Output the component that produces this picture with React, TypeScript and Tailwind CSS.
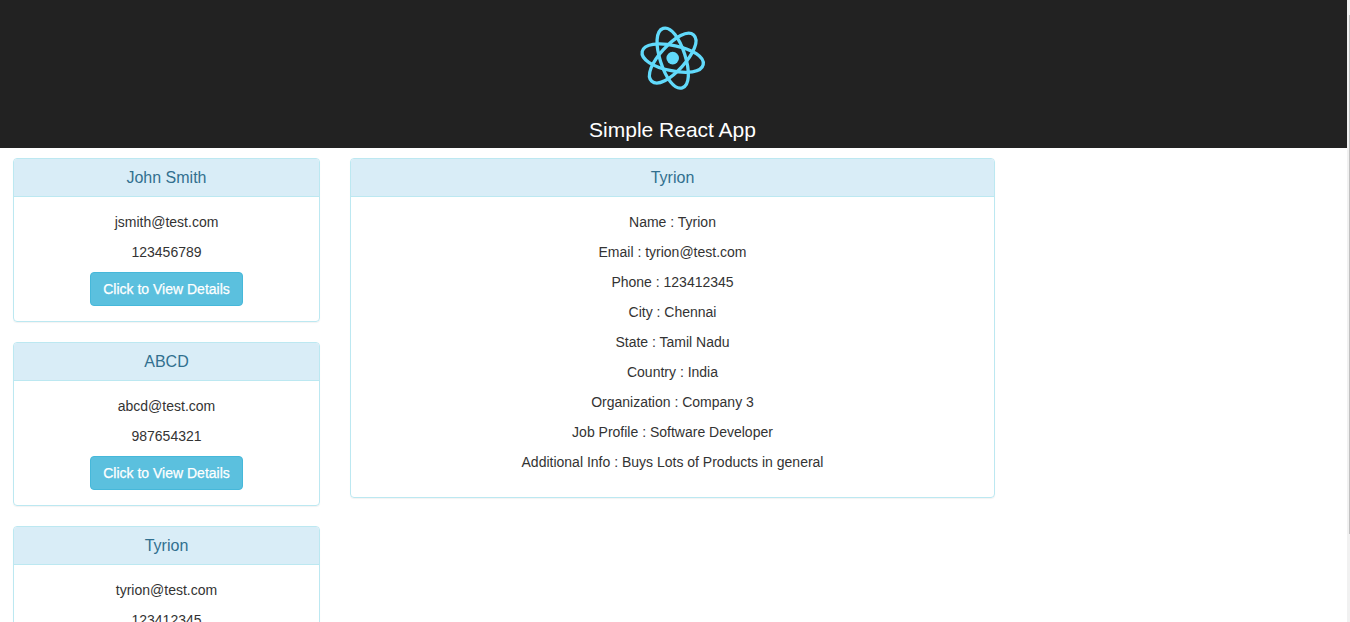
import React from "react";

type Contact = { name: string; email: string; phone: string };

const contacts: Contact[] = [
  { name: "John Smith", email: "jsmith@test.com", phone: "123456789" },
  { name: "ABCD", email: "abcd@test.com", phone: "987654321" },
  { name: "Tyrion", email: "tyrion@test.com", phone: "123412345" },
];

const details = [
  "Name : Tyrion",
  "Email : tyrion@test.com",
  "Phone : 123412345",
  "City : Chennai",
  "State : Tamil Nadu",
  "Country : India",
  "Organization : Company 3",
  "Job Profile : Software Developer",
  "Additional Info : Buys Lots of Products in general",
];

const orbit =
  "M31.2 0C31.2 8 17.4 12.6 0 12.6S-31.2 8-31.2 0-17.4-12.6 0-12.6 31.2-8 31.2 0Z";

function Logo() {
  return (
    <svg viewBox="-39.7 -40.1 80 80" className="size-20">
      <g fill="none" stroke="#61DAFB" strokeWidth="3.3">
        <path d={orbit} transform="rotate(12.2)" />
        <path d={orbit} transform="rotate(72.2)" />
        <path d={orbit} transform="rotate(132.2)" />
      </g>
      <circle r="6.3" fill="#61DAFB" />
    </svg>
  );
}

function Panel({ title, children }: { title: string; children: React.ReactNode }) {
  return (
    <section className="rounded border border-[#bce8f1] shadow-[0_1px_1px_rgba(0,0,0,0.05)]">
      <h3 className="rounded-t-[3px] border-b border-[#bce8f1] bg-[#d9edf7] px-[15px] py-2.5 text-base leading-[17px] text-[#31708f]">
        {title}
      </h3>
      <div className="p-[15px]">{children}</div>
    </section>
  );
}

export default function App() {
  return (
    <div className="flex h-[622px] overflow-hidden bg-white text-center font-['Liberation_Sans',Arial,sans-serif] text-sm leading-5 text-[#333]">
      <div className="w-[1347px] shrink-0">
        <header className="flex h-[148px] flex-col items-center bg-[#222] pt-[18px] pr-0.5 text-white">
          <Logo />
          <h2 className="mt-5 text-[21px] leading-[23px]">Simple React App</h2>
        </header>
        <main className="flex items-start gap-[30px] pt-2.5 pl-[13px]">
          <div className="flex w-[307px] flex-col gap-5">
            {contacts.map((c) => (
              <Panel key={c.name} title={c.name}>
                <p className="mb-2.5">{c.email}</p>
                <p className="mb-2.5">{c.phone}</p>
                <button className="mx-auto block rounded border border-[#46b8da] bg-[#5bc0de] px-3 py-1.5 leading-5 text-white [-webkit-text-stroke:0.25px_white]">
                  Click to View Details
                </button>
              </Panel>
            ))}
          </div>
          <div className="w-[645px]">
            <Panel title="Tyrion">
              {details.map((d) => (
                <p key={d} className="mb-2.5">{d}</p>
              ))}
            </Panel>
          </div>
        </main>
      </div>
      <div className="flex w-[3px] justify-end bg-[#f1f1f1] pt-[15px]">
        <div className="h-[519px] w-px bg-[#c1c1c1]" />
      </div>
    </div>
  );
}
